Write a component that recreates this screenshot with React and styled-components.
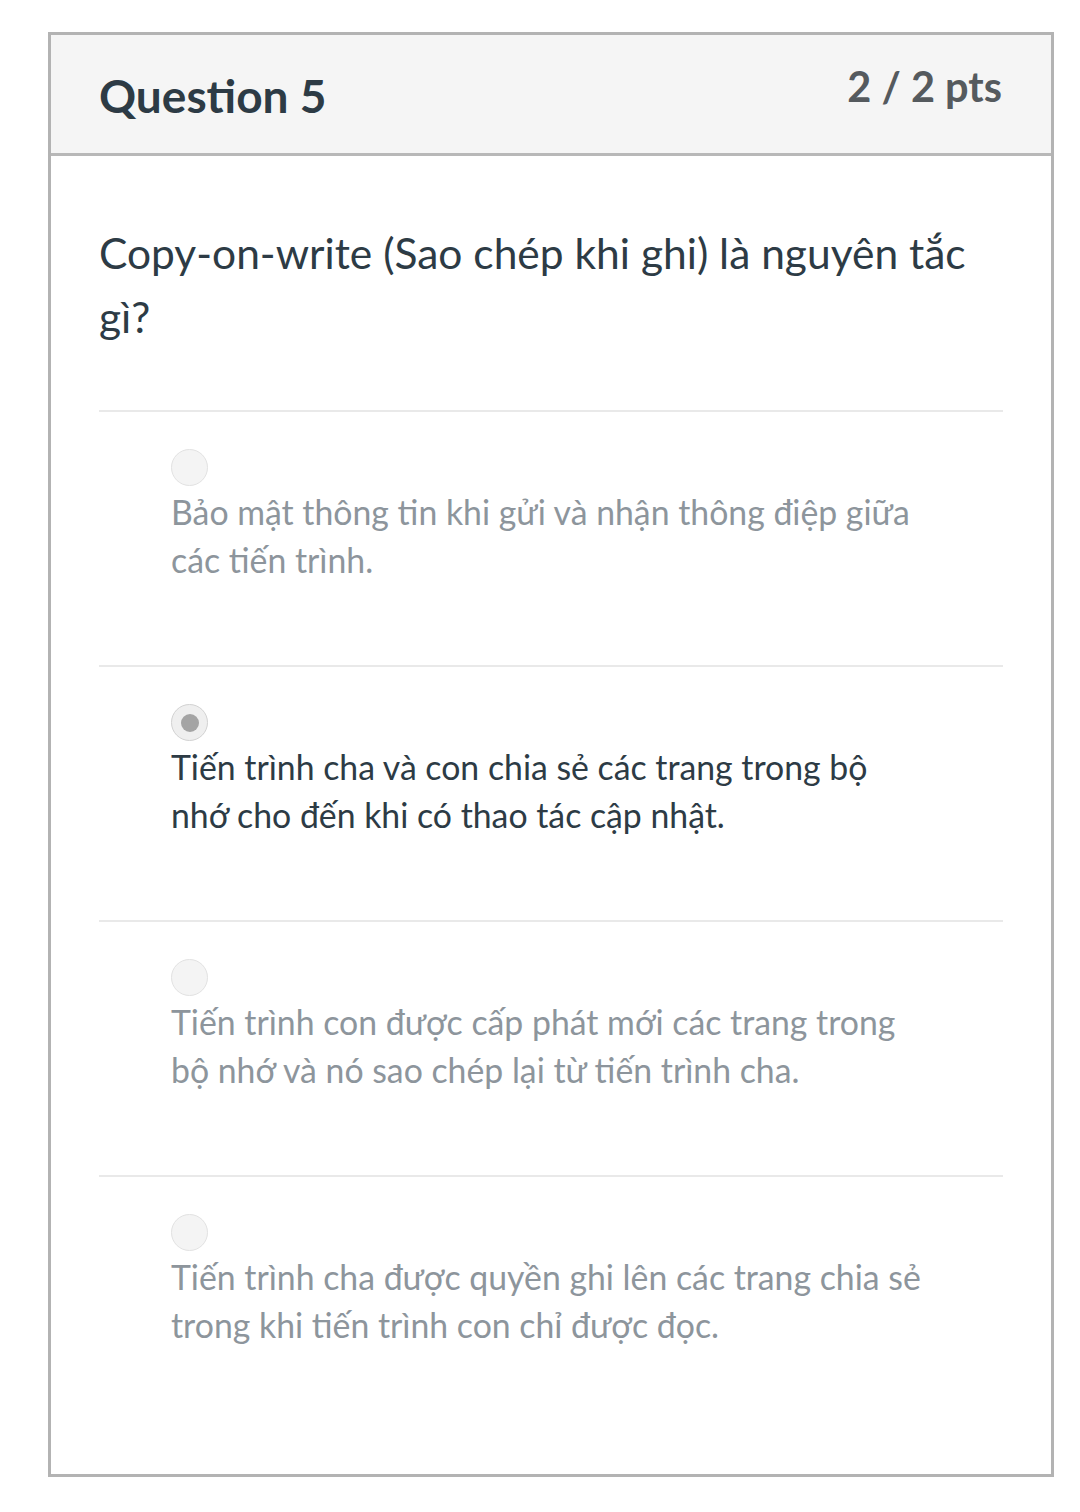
import React from "react";
import styled, { createGlobalStyle } from "styled-components";

const Global = createGlobalStyle`
  html, body { margin: 0; padding: 0; background: #ffffff; }
  body { font-family: Lato, "Noto Sans", sans-serif; }
  * { box-sizing: border-box; }
`;

const Card = styled.section`
  margin: 32px 0 0 48px;
  width: 1006px;
  height: 1445px;
  border: 3px solid #b3b3b3;
  display: flex;
  flex-direction: column;
  background: #fff;
`;

const Header = styled.header`
  background: #f5f5f5;
  border-bottom: 3px solid #b8b8b8;
  height: 121px;
  padding: 0 49px 0 48px;
  display: flex;
  justify-content: space-between;
  align-items: flex-start;
`;

const Title = styled.h2`
  margin: 33px 0 0;
  font-size: 46px;
  line-height: 56px;
  font-weight: 700;
  color: #2d3b45;
`;

const Points = styled.div`
  margin-top: 27px;
  font-size: 41.5px;
  line-height: 48px;
  font-weight: 700;
  color: #555a5e;
`;

const Body = styled.div`
  padding: 65px 48px 0 48px;
`;

const QuestionText = styled.p`
  margin: 0 0 61px;
  font-size: 42.5px;
  line-height: 64px;
  color: #2d3b45;
`;

const Option = styled.div`
  border-top: 2px solid #e9e9e9;
  padding: 37px 0 81px 72px;
  display: flex;
  flex-direction: column;
  gap: 2px;
`;

const Radio = styled.span`
  width: 37px;
  height: 37px;
  border-radius: 50%;
  background: ${(p) => (p.$checked ? "#efefef" : "#f4f4f4")};
  border: 1.5px solid ${(p) => (p.$checked ? "#d2d2d2" : "#e2e2e2")};
  display: flex;
  align-items: center;
  justify-content: center;
  &::after {
    content: "";
    display: ${(p) => (p.$checked ? "block" : "none")};
    width: 18px;
    height: 18px;
    border-radius: 50%;
    background: #a4a4a4;
  }
`;

const OptionText = styled.div`
  font-size: 33.8px;
  line-height: 48px;
  color: ${(p) => (p.$checked ? "#2d3b45" : "#8d959c")};
`;

const options = [
  { lines: ["Bảo mật thông tin khi gửi và nhận thông điệp giữa", "các tiến trình."], checked: false },
  { lines: ["Tiến trình cha và con chia sẻ các trang trong bộ", "nhớ cho đến khi có thao tác cập nhật."], checked: true },
  { lines: ["Tiến trình con được cấp phát mới các trang trong", "bộ nhớ và nó sao chép lại từ tiến trình cha."], checked: false },
  { lines: ["Tiến trình cha được quyền ghi lên các trang chia sẻ", "trong khi tiến trình con chỉ được đọc."], checked: false },
];

export default function App() {
  return (
    <>
      <Global />
      <Card>
        <Header>
          <Title>Question 5</Title>
          <Points>2 / 2 pts</Points>
        </Header>
        <Body>
          <QuestionText>
            Copy-on-write (Sao chép khi ghi) là nguyên tắc
            <br />
            gì?
          </QuestionText>
          {options.map((o, i) => (
            <Option key={i}>
              <Radio $checked={o.checked} />
              <OptionText $checked={o.checked}>
                {o.lines[0]}
                <br />
                {o.lines[1]}
              </OptionText>
            </Option>
          ))}
        </Body>
      </Card>
    </>
  );
}
